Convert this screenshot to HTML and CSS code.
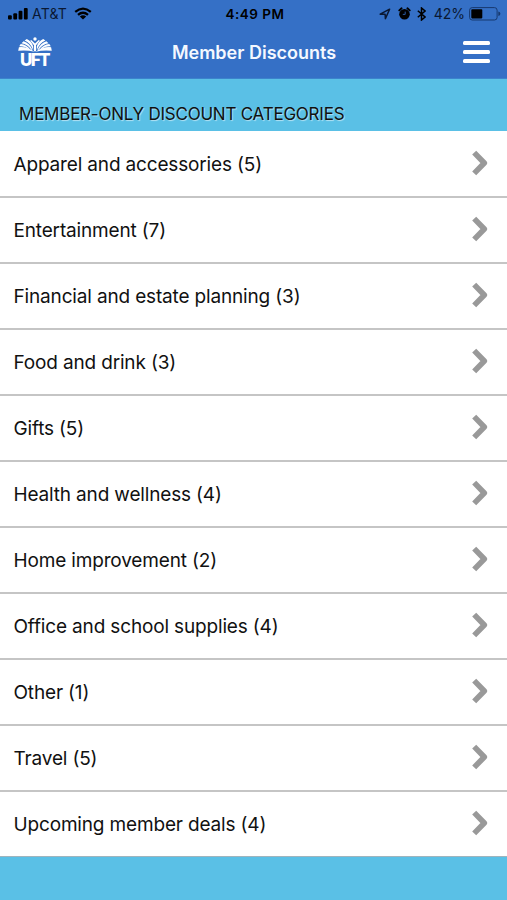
FILE: index.html
```html
<!DOCTYPE html>
<html lang="en">
<head>
  <meta charset="UTF-8" />
  <meta name="viewport" content="width=device-width, initial-scale=1" />
  <title>Member Discounts</title>
  <link rel="stylesheet" href="styles.css">
</head>
<body>
  <header class="top">
    <div class="status-bar">
      <div class="status-left">
        <svg class="signal" viewBox="0 0 20 12">
          <rect x="0" y="7.2" width="3.8" height="4.4" rx="1"/>
          <rect x="5.3" y="5.2" width="3.8" height="6.4" rx="1"/>
          <rect x="10.6" y="2.8" width="3.8" height="8.8" rx="1"/>
          <rect x="15.9" y="0" width="3.8" height="11.6" rx="1"/>
        </svg>
        <span class="carrier">AT&amp;T</span>
        <svg class="wifi" viewBox="0 0 18 13">
          <path d="M1.2 4.8Q9-1.6 16.8 4.8M4 7.9Q9 3.6 14 7.9" fill="none" stroke="#000" stroke-width="2.3"/>
          <path d="M5.8 9.4Q9 7 12.2 9.4L9 12.6Z"/>
        </svg>
      </div>
      <span class="clock">4:49 PM</span>
      <div class="status-right">
        <svg class="location" viewBox="0 0 12 12">
          <path d="M1.2 6.2 10.6 1.2 6.4 10.6 6.1 6.3Z" fill="none" stroke="#0a1833" stroke-width="1.5" stroke-linejoin="round"/>
        </svg>
        <svg class="alarm" viewBox="0 0 13 13">
          <circle cx="6.5" cy="7.2" r="5.3"/>
          <path d="M1.3 3.4 3.6 1.3M11.7 3.4 9.4 1.3" stroke="#000" stroke-width="1.9" stroke-linecap="round"/>
          <path d="M7.2 4.6V7.4H4.8" fill="none" stroke="#3570c6" stroke-width=".8"/>
        </svg>
        <svg class="bluetooth" viewBox="0 0 9 14">
          <path d="M.8 3.8 8 10 4.5 13V1L8 4 .8 10.2" fill="none" stroke="#000" stroke-width="1.5"/>
        </svg>
        <span class="percent">42%</span>
        <svg class="battery" viewBox="0 0 32 14">
          <rect x=".6" y=".6" width="27.5" height="12.4" rx="2.6" fill="none" stroke="#17396f" stroke-width="1"/>
          <rect x="2.3" y="2.2" width="11" height="9.2" rx=".8"/>
          <path d="M29.3 4.6Q31.4 5 31.4 6.8T29.3 9Z" fill="#17396f"/>
        </svg>
      </div>
    </div>

    <div class="nav">
      <div class="logo">
        <svg class="logo-book" viewBox="0 0 34 15">
          <circle cx="17" cy="2" r="1.7"/>
          <path d="M17 6.4 13.2 3.1 12.2 3.8 16 8.3V14.2H18V8.3L21.8 3.8 20.8 3.1Z"/>
          <path d="M15.2 9.4Q13.3 3.8 8.8 2L6.6 3.6Q12.5 6 15.2 13.2Z"/>
          <path d="M14.4 12.7Q11.5 6 5.6 4.2L3.5 6.2Q9.8 7 13.6 13.1Z"/>
          <path d="M12.6 13Q8.6 7.4 2.7 6.9L1.2 9.2Q7.2 9 11.2 12.6Z"/>
          <path d="M.9 10.2Q9 9.4 16.6 14.8Q8 12.6.2 13.8Z"/>
          <path d="M18.8 9.4Q20.7 3.8 25.2 2L27.4 3.6Q21.5 6 18.8 13.2Z"/>
          <path d="M19.6 12.7Q22.5 6 28.4 4.2L30.5 6.2Q24.2 7 20.4 13.1Z"/>
          <path d="M21.4 13Q25.4 7.4 31.3 6.9L32.8 9.2Q26.8 9 22.8 12.6Z"/>
          <path d="M33.1 10.2Q25 9.4 17.4 14.8Q26 12.6 33.8 13.8Z"/>
        </svg>
        <span class="logo-text">UFT</span>
      </div>
      <h1>Member Discounts</h1>
      <button class="menu-btn" aria-label="Menu">
        <span></span>
        <span></span>
        <span></span>
      </button>
    </div>
  </header>

  <h2 class="section-title">MEMBER-ONLY DISCOUNT CATEGORIES</h2>

  <ul class="categories">
    <li><span>Apparel and accessories (5)</span><svg class="arrow" viewBox="0 0 18 28"><path d="M3.2 3.6 13.3 14 3.2 24.4"/></svg></li>
    <li><span>Entertainment (7)</span><svg class="arrow" viewBox="0 0 18 28"><path d="M3.2 3.6 13.3 14 3.2 24.4"/></svg></li>
    <li><span>Financial and estate planning (3)</span><svg class="arrow" viewBox="0 0 18 28"><path d="M3.2 3.6 13.3 14 3.2 24.4"/></svg></li>
    <li><span>Food and drink (3)</span><svg class="arrow" viewBox="0 0 18 28"><path d="M3.2 3.6 13.3 14 3.2 24.4"/></svg></li>
    <li><span>Gifts (5)</span><svg class="arrow" viewBox="0 0 18 28"><path d="M3.2 3.6 13.3 14 3.2 24.4"/></svg></li>
    <li><span>Health and wellness (4)</span><svg class="arrow" viewBox="0 0 18 28"><path d="M3.2 3.6 13.3 14 3.2 24.4"/></svg></li>
    <li><span>Home improvement (2)</span><svg class="arrow" viewBox="0 0 18 28"><path d="M3.2 3.6 13.3 14 3.2 24.4"/></svg></li>
    <li><span>Office and school supplies (4)</span><svg class="arrow" viewBox="0 0 18 28"><path d="M3.2 3.6 13.3 14 3.2 24.4"/></svg></li>
    <li><span>Other (1)</span><svg class="arrow" viewBox="0 0 18 28"><path d="M3.2 3.6 13.3 14 3.2 24.4"/></svg></li>
    <li><span>Travel (5)</span><svg class="arrow" viewBox="0 0 18 28"><path d="M3.2 3.6 13.3 14 3.2 24.4"/></svg></li>
    <li><span>Upcoming member deals (4)</span><svg class="arrow" viewBox="0 0 18 28"><path d="M3.2 3.6 13.3 14 3.2 24.4"/></svg></li>
  </ul>
</body>
</html>
```
FILE: styles.css
```css
* {
  box-sizing: border-box;
}
body, html {
  margin: 0;
  padding: 0;
  font-family: Inter, "Liberation Sans", sans-serif;
  background-color: #5ac0e6;
  color: #111;
}
body {
  height: 900px;
  overflow: hidden;
}
svg {
  display: block;
  flex: none;
}
.top {
  height: 79px;
  background-color: #3570c6;
  border-bottom: 1px solid #3c83cc;
}
.status-bar {
  display: grid;
  grid-template-columns: 1fr auto 1fr;
  align-items: center;
  height: 27px;
  padding: 0 6px 0 8px;
  color: #000;
}
.status-left,
.status-right {
  display: flex;
  align-items: center;
}
.status-right {
  justify-content: flex-end;
}
.signal {
  width: 20px;
  height: 12px;
}
.carrier {
  margin: 0 7px 0 4px;
  font-size: 14px;
  letter-spacing: 0.2px;
  color: #0a1833;
}
.wifi {
  width: 18px;
  height: 13px;
}
.clock {
  font-weight: 600;
  font-size: 13.5px;
  letter-spacing: 0.5px;
  padding-left: 1px;
}
.location {
  width: 12px;
  height: 12px;
  margin-right: 7px;
}
.alarm {
  width: 13px;
  height: 13px;
  margin-right: 6px;
}
.bluetooth {
  width: 9px;
  height: 14px;
  margin-right: 8px;
}
.percent {
  margin-right: 4px;
  font-size: 14px;
  color: #0a1833;
}
.battery {
  width: 32px;
  height: 14px;
}
.nav {
  display: grid;
  grid-template-columns: 1fr auto 1fr;
  align-items: center;
  height: 50px;
  padding: 0 17px 0 18px;
}
.logo {
  width: 34px;
  height: 31px;
}
.logo-book {
  width: 34px;
  height: 15px;
  fill: #fff;
}
.logo-text {
  display: block;
  height: 20px;
  margin-top: -2px;
  padding-right: 1px;
  font-size: 17px;
  font-weight: 800;
  line-height: 20px;
  letter-spacing: -1.6px;
  text-align: center;
  color: #fff;
}
h1 {
  margin: 0;
  font-size: 18px;
  font-weight: 600;
  color: #f4f8ff;
}
.menu-btn {
  display: flex;
  flex-direction: column;
  gap: 5px;
  justify-self: end;
  padding: 0;
  border: none;
  background: none;
}
.menu-btn span {
  width: 27px;
  height: 4px;
  border-radius: 1.5px;
  background-color: #fff;
}
.section-title {
  height: 52px;
  margin: 0;
  padding: 24px 19px 0;
  font-size: 17px;
  font-weight: 400;
  line-height: 22px;
  letter-spacing: -0.23px;
  text-shadow: 1px 1px 1px rgba(255, 255, 255, 0.55);
}
.categories {
  margin: 0;
  padding: 0;
  list-style: none;
  background-color: #fff;
}
.categories li {
  display: flex;
  align-items: center;
  justify-content: space-between;
  height: 66px;
  padding: 0 18px 0 13.5px;
  border-bottom: 2px solid #c5c5c5;
  font-size: 19px;
  letter-spacing: -0.16px;
}
.categories li:first-child {
  height: 67px;
  padding-top: 1px;
}
.categories li:last-child {
  height: 65px;
  border-bottom: 1px solid #9fb4bd;
}
.arrow {
  width: 18px;
  height: 28px;
  margin-top: -2px;
}
.arrow path {
  fill: none;
  stroke: #999;
  stroke-width: 5.6;
  stroke-linejoin: round;
}
```
